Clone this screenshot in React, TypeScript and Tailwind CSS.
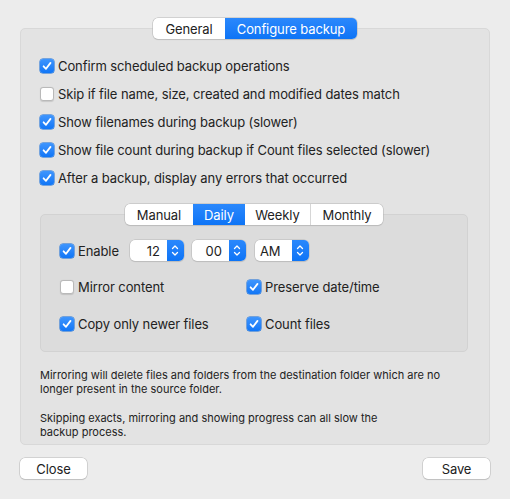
import React from "react";

const font = "font-['Inter','Liberation_Sans',sans-serif]";

function Check({ checked }: { checked: boolean }) {
  if (checked) {
    return (
      <span className="flex h-[14px] w-[14px] shrink-0 items-center justify-center rounded-[3px] bg-gradient-to-b from-[#3e95fd] to-[#0f76f6] shadow-[0_0_0_0.5px_#0a66d8]">
        <svg width="10" height="10" viewBox="0 0 10 10" fill="none">
          <path d="M1.6 5.3 L4 7.8 L8.5 1.9" stroke="white" strokeWidth="1.8" strokeLinecap="round" strokeLinejoin="round" />
        </svg>
      </span>
    );
  }
  return (
    <span className="h-[14px] w-[14px] shrink-0 rounded-[3px] border border-[#b9b9b9] bg-white shadow-[0_0.5px_1px_rgba(0,0,0,0.12)]" />
  );
}

function CheckRow({ checked, label, className = "" }: { checked: boolean; label: string; className?: string }) {
  return (
    <div className={`flex items-center gap-[4px] ${className}`}>
      <Check checked={checked} />
      <span className="text-[13px] leading-[16px] tracking-[-0.1px] text-[#222]">{label}</span>
    </div>
  );
}

function Segmented({ items, selected, widths }: { items: string[]; selected: number; widths: number[] }) {
  return (
    <div className="flex h-[21px] overflow-hidden rounded-[5px] bg-white shadow-[0_0_0_0.5px_#b5b5b5,0_1px_1px_rgba(0,0,0,0.12)]">
      {items.map((it, i) => {
        const sel = i === selected;
        const nextSel = i + 1 === selected;
        const last = i === items.length - 1;
        return (
          <div
            key={it}
            style={{ width: widths[i] }}
            className={`flex items-center justify-center text-[13px] leading-[16px] tracking-[-0.1px] ${
              sel ? "bg-gradient-to-b from-[#2a88fc] to-[#0c74f6] text-white" : "text-[#222]"
            } ${!sel && !nextSel && !last ? "border-r border-[#d6d6d6]" : ""}`}
          >
            {it}
          </div>
        );
      })}
    </div>
  );
}

function Popup({ value, align }: { value: string; align: "right" | "left" }) {
  return (
    <div className="flex h-[21px] w-[54px] overflow-hidden rounded-[5px] bg-white shadow-[0_0_0_0.5px_#b8b8b8,0_1px_1px_rgba(0,0,0,0.12)]">
      <div
        className={`flex flex-1 items-center text-[13px] leading-[16px] text-[#222] ${
          align === "right" ? "justify-end pr-[7px]" : "justify-start pl-[5px]"
        }`}
      >
        {value}
      </div>
      <div className="flex w-[17px] items-center justify-center bg-gradient-to-b from-[#2a88fc] to-[#0c74f6]">
        <svg width="8" height="13" viewBox="0 0 8 13" fill="none">
          <path d="M1.5 4.5 L4 2 L6.5 4.5" stroke="white" strokeWidth="1.3" strokeLinecap="round" strokeLinejoin="round" />
          <path d="M1.5 8.5 L4 11 L6.5 8.5" stroke="white" strokeWidth="1.3" strokeLinecap="round" strokeLinejoin="round" />
        </svg>
      </div>
    </div>
  );
}

function Button({ label }: { label: string }) {
  return (
    <div className="flex h-[21px] w-[67px] items-center justify-center rounded-[5px] bg-white text-[13px] leading-[16px] tracking-[-0.1px] text-[#222] shadow-[0_0_0_0.5px_#b8b8b8,0_1px_1px_rgba(0,0,0,0.15)]">
      {label}
    </div>
  );
}

export default function App() {
  return (
    <div className={`h-[499px] w-[510px] bg-[#ececec] px-[20px] pt-[18px] ${font}`}>
      <div className="relative z-10 flex justify-center">
        <Segmented items={["General", "Configure backup"]} selected={1} widths={[72, 132]} />
      </div>
      <div className="-mt-[11px] h-[417px] rounded-[5px] border border-[#d8d8d8] bg-[#e3e3e3] px-[19px] pt-[23px]">
        <CheckRow checked label="Confirm scheduled backup operations" className="h-[28px]" />
        <CheckRow checked={false} label="Skip if file name, size, created and modified dates match" className="h-[28px]" />
        <CheckRow checked label="Show filenames during backup (slower)" className="h-[28px]" />
        <CheckRow checked label="Show file count during backup if Count files selected (slower)" className="h-[28px]" />
        <CheckRow checked label="After a backup, display any errors that occurred" className="h-[28px]" />

        <div className="mr-[2px] mt-[12px]">
          <div className="relative z-10 flex justify-center">
            <Segmented items={["Manual", "Daily", "Weekly", "Monthly"]} selected={1} widths={[68, 52, 66, 72]} />
          </div>
          <div className="-mt-[11px] h-[138px] rounded-[5px] border border-[#d2d2d2] bg-[#dcdcdc] px-[19px] pt-[25px]">
            <div className="flex h-[21px] items-center">
              <CheckRow checked label="Enable" />
              <div className="ml-[11px] flex gap-[8px]">
                <Popup value="12" align="right" />
                <Popup value="00" align="right" />
                <div className="ml-[1px]">
                  <Popup value="AM" align="left" />
                </div>
              </div>
            </div>
            <div className="mt-[16px] grid h-[20px] grid-cols-[187px_1fr] items-center">
              <CheckRow checked={false} label="Mirror content" />
              <CheckRow checked label="Preserve date/time" />
            </div>
            <div className="mt-[17px] grid h-[20px] grid-cols-[187px_1fr] items-center">
              <CheckRow checked label="Copy only newer files" />
              <CheckRow checked label="Count files" />
            </div>
          </div>
        </div>

        <p className="mt-[16px] text-[11px] leading-[14px] text-[#222]">
          Mirroring will delete files and folders from the destination folder which are no
          <br />
          longer present in the source folder.
        </p>
        <p className="mt-[15px] text-[11px] leading-[14px] text-[#222]">
          Skipping exacts, mirroring and showing progress can all slow the
          <br />
          backup process.
        </p>
      </div>
      <div className="mt-[13px] flex justify-between">
        <Button label="Close" />
        <Button label="Save" />
      </div>
    </div>
  );
}
